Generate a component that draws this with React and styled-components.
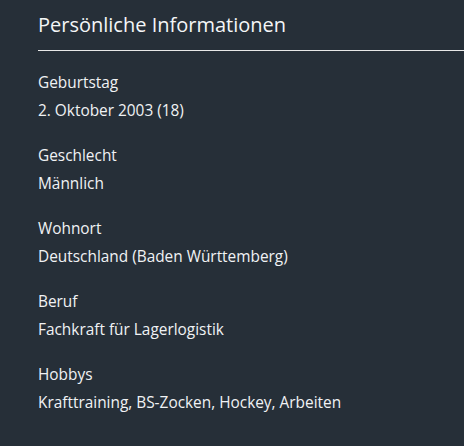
import React from 'react';
import styled, { createGlobalStyle } from 'styled-components';

const GlobalStyle = createGlobalStyle`
  html, body {
    margin: 0;
    padding: 0;
    background: #262f38;
  }
  body {
    font-family: "Open Sans", "Liberation Sans", sans-serif;
    color: #f0f2f4;
  }
`;

const Section = styled.section`
  min-height: 446px;
  padding: 11px 0 0 38px;
  box-sizing: border-box;
`;

const Title = styled.h2`
  margin: 0;
  font-size: 20px;
  font-weight: 400;
  line-height: 28px;
  padding-bottom: 11px;
  border-bottom: 1px solid #e8e8e8;
  color: #f4f6f7;
`;

const List = styled.dl`
  margin: 0;
  padding-top: 18px;
`;

const Item = styled.div`
  margin-bottom: 17px;
`;

const Label = styled.dt`
  font-size: 15.4px;
  line-height: 28px;
`;

const Value = styled.dd`
  margin: 0;
  font-size: 15.4px;
  line-height: 28px;
`;

const info = [
  ['Geburtstag', '2. Oktober 2003 (18)'],
  ['Geschlecht', 'Männlich'],
  ['Wohnort', 'Deutschland (Baden Württemberg)'],
  ['Beruf', 'Fachkraft für Lagerlogistik'],
  ['Hobbys', 'Krafttraining, BS-Zocken, Hockey, Arbeiten'],
];

export default function App() {
  return (
    <>
      <GlobalStyle />
      <Section>
        <Title>Persönliche Informationen</Title>
        <List>
          {info.map(([label, value]) => (
            <Item key={label}>
              <Label>{label}</Label>
              <Value>{value}</Value>
            </Item>
          ))}
        </List>
      </Section>
    </>
  );
}
